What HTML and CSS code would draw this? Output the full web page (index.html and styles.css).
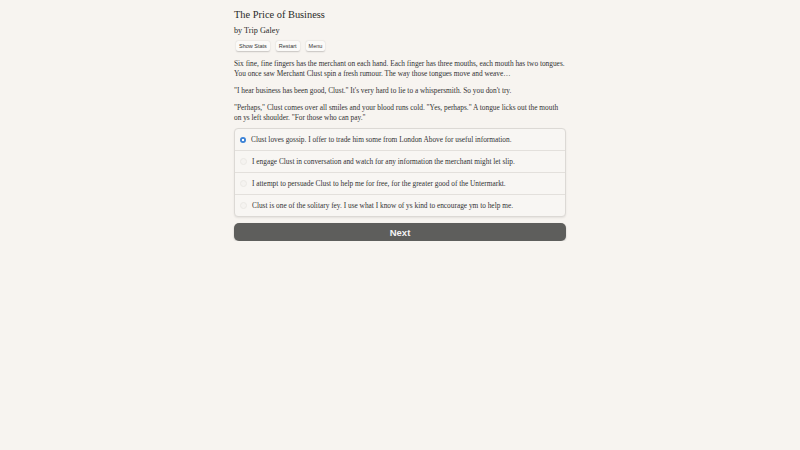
FILE: index.html
```html
<!DOCTYPE html>
<html>
<head>
<meta charset="utf-8">
<link rel="stylesheet" href="styles.css">
</head>
<body>
<div class="container">
  <h1 class="title">The Price of Business</h1>
  <div class="author">by Trip Galey</div>
  <div class="buttons">
    <button class="small-btn">Show Stats</button>
    <button class="small-btn">Restart</button>
    <button class="small-btn">Menu</button>
  </div>
  <p class="para">Six fine, fine fingers has the merchant on each hand. Each finger has three mouths, each mouth has two tongues. You once saw Merchant Clust spin a fresh rumour. The way those tongues move and weave…</p>
  <p class="para">"I hear business has been good, Clust." It's very hard to lie to a whispersmith. So you don't try.</p>
  <p class="para">"Perhaps," Clust comes over all smiles and your blood runs cold. "Yes, perhaps." A tongue licks out the mouth on ys left shoulder. "For those who can pay."</p>
  <div class="choices">
    <div class="choice selected"><span class="radio on"></span><span>Clust loves gossip. I offer to trade him some from London Above for useful information.</span></div>
    <div class="choice"><span class="radio"></span><span>I engage Clust in conversation and watch for any information the merchant might let slip.</span></div>
    <div class="choice"><span class="radio"></span><span>I attempt to persuade Clust to help me for free, for the greater good of the Untermarkt.</span></div>
    <div class="choice"><span class="radio"></span><span>Clust is one of the solitary fey. I use what I know of ys kind to encourage ym to help me.</span></div>
  </div>
  <button class="next">Next</button>
</div>
</body>
</html>
```
FILE: styles.css
```css
html, body {
  margin: 0;
  padding: 0;
  background: #f7f4f0;
}
body {
  font-family: "Liberation Serif", "Times New Roman", serif;
  color: #2a2a2a;
}
.container {
  width: 332px;
  margin: 0 auto;
  padding-top: 8px;
}
.title {
  font-size: 10.4px;
  font-weight: normal;
  margin: 0;
  line-height: 14px;
  color: #2a2a2a;
}
.author {
  font-size: 8.2px;
  margin-top: 3px;
  line-height: 12px;
  color: #2a2a2a;
}
.buttons {
  display: flex;
  gap: 6px;
  margin-top: 4px;
  margin-left: 2px;
}
.small-btn {
  font-family: "Liberation Sans", Arial, sans-serif;
  font-size: 5.5px;
  padding: 1px 3px;
  height: 10px;
  line-height: 8px;
  background: #fbfaf8;
  border: none;
  border-radius: 2px;
  box-shadow: 0 0.5px 1.5px rgba(0,0,0,0.2);
  color: #333;
}
.para {
  font-size: 7.35px;
  line-height: 10px;
  margin: 8px 0 0 0;
  color: #333;
}
.para + .para {
  margin-top: 7px;
}
.choices {
  margin-top: 5px;
  border: 1px solid #dcd9d5;
  border-radius: 4px;
  background: #f8f6f3;
  box-shadow: 0 1px 2px rgba(0,0,0,0.08);
}
.choice {
  display: flex;
  align-items: center;
  gap: 5px;
  height: 21px;
  padding-left: 5px;
  font-size: 7.35px;
  color: #333;
  border-top: 1px solid #e3e0dc;
}
.choice:first-child {
  border-top: none;
}
.radio {
  width: 5px;
  height: 5px;
  border-radius: 50%;
  border: 0.5px solid #ebe8e4;
  background: #f5f3f0;
  flex: none;
}
.radio.on {
  width: 6px;
  height: 6px;
  border: none;
  background: radial-gradient(circle, #fff 0 1.2px, #3b82d6 1.6px);
}
.next {
  display: block;
  width: 100%;
  margin-top: 6px;
  height: 18px;
  border: none;
  border-radius: 5px;
  background: #5e5e5c;
  color: #f4f4f4;
  font-family: "Liberation Sans", Arial, sans-serif;
  font-weight: bold;
  font-size: 9.5px;
  box-shadow: 0 1px 2px rgba(0,0,0,0.2);
}
```
